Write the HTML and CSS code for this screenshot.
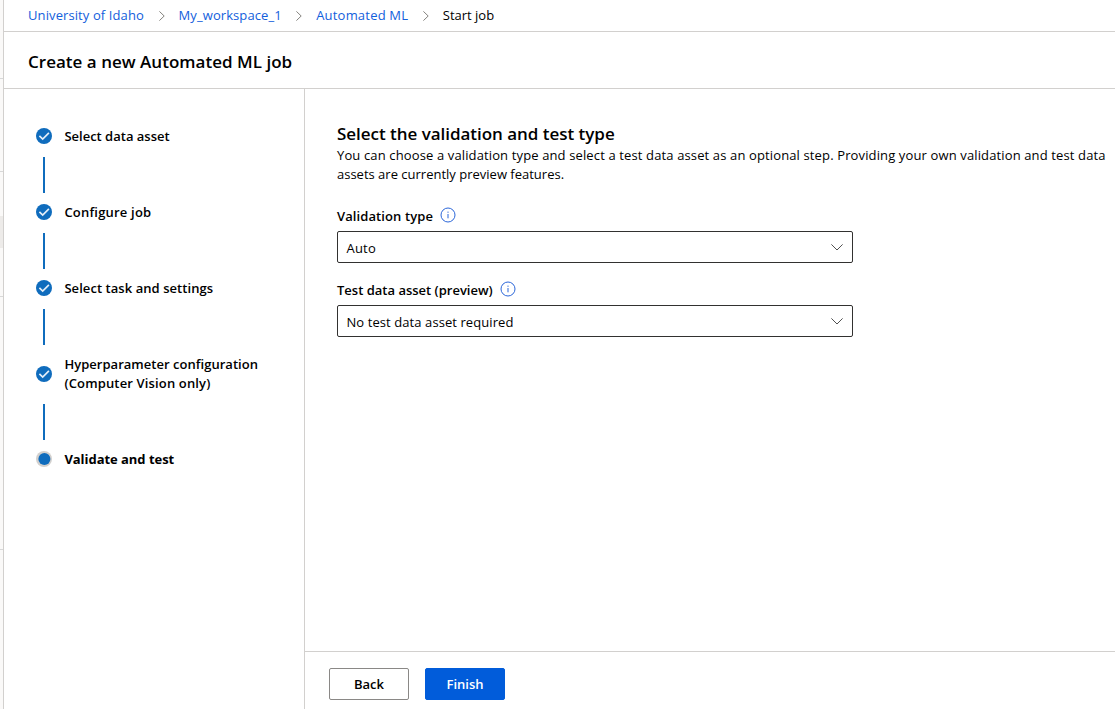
FILE: index.html
```html
<!DOCTYPE html>
<html lang="en">
<head>
<meta charset="utf-8">
<title>Create a new Automated ML job</title>
<link rel="stylesheet" href="styles.css">
</head>
<body>
<svg class="defs" width="0" height="0">
  <symbol id="check" viewBox="0 0 16 16"><circle cx="8" cy="8" r="8" fill="#0f6cbd"/><path d="M3.4 7.9 6.7 11 12.9 4.9" fill="none" stroke="#e4eef8" stroke-width="1.7"/></symbol>
  <symbol id="current" viewBox="0 0 16 16"><circle cx="8" cy="8" r="8" fill="#d2d0ce"/><circle cx="8.4" cy="8" r="6" fill="#0f6cbd"/></symbol>
  <symbol id="info" viewBox="0 0 16 16"><circle cx="8" cy="8" r="7" fill="none" stroke="#2b66d9"/><path d="M8 7v4.3M8 4.6v1.2" fill="none" stroke="#2b66d9"/></symbol>
  <symbol id="down" viewBox="0 0 12 7"><path d="M.4.4 6 6 11.6.4" fill="none" stroke="#505050"/></symbol>
  <symbol id="next" viewBox="0 0 6 10"><path d="M.4.4 5.2 5 .4 9.6" fill="none" stroke="#85837f"/></symbol>
</svg>
<div class="app">
  <div class="rail"><i class="gap-a"></i><i class="gap-b"></i><i class="active"></i><i class="gap-c"></i><i class="gap-d"></i></div>
  <main class="page">
    <nav class="crumbs">
      <a class="c1">University of Idaho</a><svg class="next"><use href="#next"/></svg>
      <a class="c2">My_workspace_1</a><svg class="next"><use href="#next"/></svg>
      <a class="c3">Automated ML</a><svg class="next"><use href="#next"/></svg>
      <span class="c4">Start job</span>
    </nav>
    <header class="title"><h1>Create a new Automated ML job</h1></header>
    <div class="body">
      <aside class="steps">
        <div class="step"><svg><use href="#check"/></svg><span class="s1">Select data asset</span></div>
        <div class="line"></div>
        <div class="step"><svg><use href="#check"/></svg><span class="s2">Configure job</span></div>
        <div class="line"></div>
        <div class="step"><svg><use href="#check"/></svg><span class="s3">Select task and settings</span></div>
        <div class="line"></div>
        <div class="step tall"><svg><use href="#check"/></svg><span class="s4">Hyperparameter configuration<br><span class="s4b">(Computer Vision only)</span></span></div>
        <div class="line"></div>
        <div class="step current"><svg><use href="#current"/></svg><span class="s5">Validate and test</span></div>
      </aside>
      <section class="main">
        <div class="content">
          <h2>Select the validation and test type</h2>
          <p><span class="intro">You can choose a validation type and select a test data asset as an optional step. Providing your own validation and test data</span><br>assets are currently preview features.</p>
          <div class="label"><span class="l1">Validation type</span><svg><use href="#info"/></svg></div>
          <div class="select"><span class="v1">Auto</span><svg><use href="#down"/></svg></div>
          <div class="label"><span class="l2">Test data asset (preview)</span><svg><use href="#info"/></svg></div>
          <div class="select"><span class="v2">No test data asset required</span><svg><use href="#down"/></svg></div>
        </div>
        <footer class="actions"><button class="back">Back</button><button class="finish">Finish</button></footer>
      </section>
    </div>
  </main>
</div>
</body>
</html>
```
FILE: styles.css
```css
* { box-sizing: border-box; }
body { margin: 0; font: 13px/19px "Open Sans", "Noto Sans", sans-serif; color: #000; background: #fff; }
h1, h2, p { margin: 0; }
span, a, h1, h2, p { white-space: nowrap; }
.defs { display: block; }
.app { display: flex; height: 709px; overflow: hidden; }
.rail { width: 4px; background: #faf9f8; border-right: 1px solid #d2d0ce; display: flex; flex-direction: column; }
.rail i { display: block; border-bottom: 1px solid #d8d8d8; flex: none; }
.rail .gap-a { height: 79px; }
.rail .gap-b { height: 93px; }
.rail .active { height: 32px; margin-top: 44px; background: #edebe9; border: 0; }
.rail .gap-c { height: 49px; }
.rail .gap-d { height: 253px; }
.page { flex: 1; display: flex; flex-direction: column; min-width: 0; }
.crumbs { height: 32px; border-bottom: 1px solid #d2d0ce; padding-left: 24px; display: flex; align-items: center; }
.crumbs a { color: #1260dc; }
.crumbs .next { width: 6px; height: 10px; margin: 0 14px 0 14.6px; flex: none; }
.crumbs a, .crumbs span { flex: none; }
.c1 { width: 116px; letter-spacing: .1px; }
.c2 { width: 103px; letter-spacing: .08px; }
.c3 { width: 92px; letter-spacing: .2px; }
.title { height: 57px; border-bottom: 1px solid #d2d0ce; padding: 18px 0 0 24px; }
h1 { font-size: 17px; font-weight: 600; line-height: 24px; letter-spacing: .02px; }
.body { flex: 1; display: flex; min-height: 0; }
.steps { width: 301px; border-right: 1px solid #d2d0ce; padding: 38px 0 0 32px; flex: none; }
.step { display: flex; align-items: center; gap: 12.4px; font-weight: 600; }
.step svg { width: 16px; height: 16px; flex: none; margin-top: -2px; }
.step.tall svg { margin-top: 0; }
.step.current { font-weight: 700; }
.s2 { letter-spacing: .2px; }
.s3 { letter-spacing: .06px; }
.s4 { letter-spacing: .03px; }
.s4b { letter-spacing: .15px; }
.s5 { letter-spacing: -.04px; }
.line { width: 2px; height: 36px; margin: 11px 0 10px 7px; background: #0f6cbd; }
.main { flex: 1; display: flex; flex-direction: column; min-width: 0; }
.content { flex: 1; padding: 33px 0 0 32px; overflow: hidden; }
h2 { font-size: 17px; font-weight: 600; line-height: 24px; letter-spacing: -.03px; }
.intro { letter-spacing: .13px; }
.label { display: flex; align-items: center; gap: 7px; height: 20px; margin-top: 22px; font-weight: 600; }
.label svg { width: 16px; height: 16px; margin-top: -3px; }
.l1 { letter-spacing: .1px; }
.select + .label { margin-top: 17px; }
.select { width: 516px; height: 32px; margin-top: 5px; border: 1px solid #323130; border-radius: 2px; padding: 2px 9.5px 0 8.5px; display: flex; align-items: center; justify-content: space-between; }
.select svg { width: 12px; height: 7px; margin-top: -2px; }
.v1 { letter-spacing: .2px; }
.v2 { letter-spacing: .08px; }
.actions { height: 58px; border-top: 1px solid #d2d0ce; padding: 16px 0 0 24px; display: flex; gap: 16px; }
button { width: 80px; height: 32px; padding: 0; font: 600 13px/19px "Open Sans", sans-serif; border-radius: 2px; border: 1px solid #8a8886; background: #fff; color: #000; }
.finish { background: #015cda; border-color: #015cda; color: #fff; }
```
